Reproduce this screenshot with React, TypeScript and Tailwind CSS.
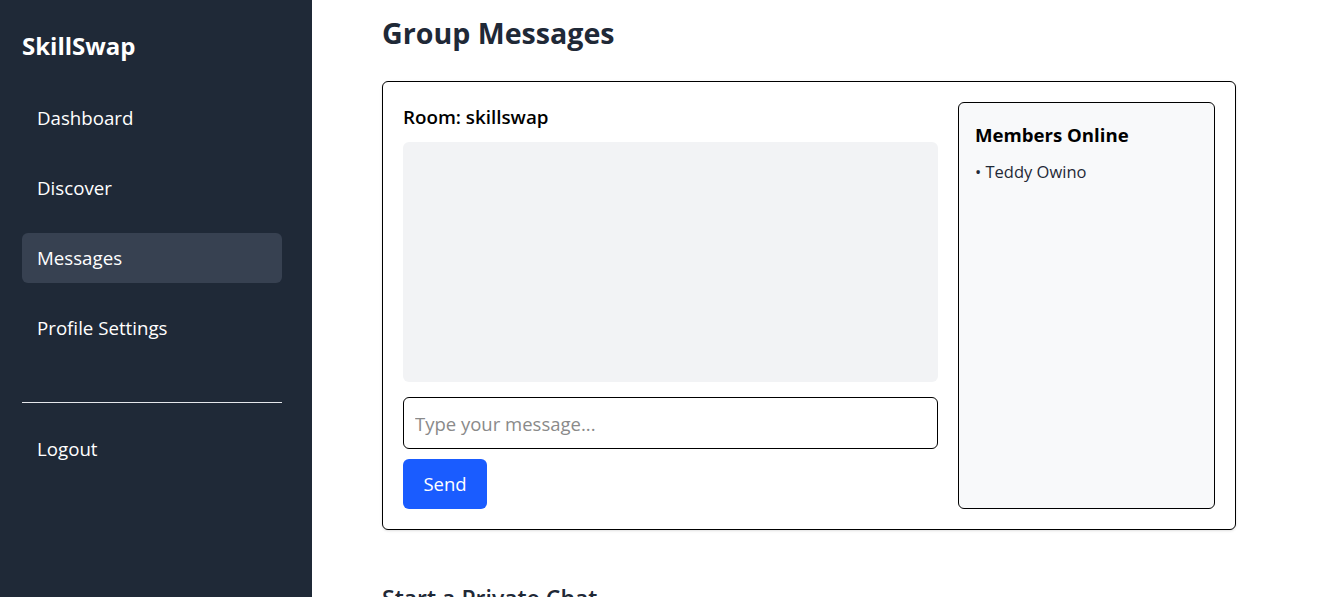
import React, { useEffect, useRef, useState } from 'react'

const navItems = ['Dashboard', 'Discover', 'Messages', 'Profile Settings']

const Sidebar = ({ active }: { active: string }) => {
    return (
        <aside className="flex h-full w-[312px] shrink-0 flex-col bg-[#1f2937] pl-[22px] pr-[30px] pt-[28px] text-white">
            <h1 className="text-[24px] font-bold leading-[36px]">SkillSwap</h1>
            <nav className="mt-[29px] flex flex-col gap-[20px]">
                {navItems.map((item) => (
                    <a
                        key={item}
                        href="#"
                        className={`flex h-[50px] items-center rounded-md px-[15px] text-[18.7px] ${
                            item == active ? 'bg-[#374151]' : ''
                        }`}
                    >
                        {item}
                    </a>
                ))}
            </nav>
            <hr className="mt-[49px] border-t border-[#e5e7eb]" />
            <a href="#" className="mt-[21px] flex h-[50px] items-center px-[15px] text-[18.7px]">
                Logout
            </a>
        </aside>
    )
}

const GroupChat = () => {
    const [message, setMessage] = useState('')
    const members = ['Teddy Owino']

    return (
        <div className="flex w-full max-w-[854px] gap-[20px] rounded-md border border-black bg-white p-[20px] shadow-sm">
            <div className="flex flex-1 flex-col">
                <h3 className="mt-[3px] text-[18.8px] font-semibold leading-[24px] text-black">Room: skillswap</h3>
                <div className="mt-[13px] h-[240px] rounded-md bg-[#f2f3f5]" />
                <input
                    value={message}
                    onChange={(e) => setMessage(e.target.value)}
                    placeholder="Type your message..."
                    className="mt-[15px] h-[52px] w-full rounded-md border border-black px-[11px] text-[18.5px] text-black outline-none placeholder:text-[#8a8a8a]"
                />
                <button className="mt-[10px] h-[50px] w-[84px] rounded-md bg-[#1a5cff] text-[18.5px] text-white">Send</button>
            </div>
            <div className="w-[257px] shrink-0 rounded-md border border-black bg-[#f8f9fa] px-[16px] py-[18px]">
                <h4 className="text-[18.6px] font-bold leading-[28px] text-black">Members Online</h4>
                <ul className="mt-[12px]">
                    {members.map((m) => (
                        <li key={m} className="text-[16.5px] leading-[22px] text-[#1f2937]">
                            • {m}
                        </li>
                    ))}
                </ul>
            </div>
        </div>
    )
}

export default function App() {
    const mainRef = useRef<HTMLElement>(null)

    useEffect(() => {
        if (mainRef.current) mainRef.current.scrollTop = 67
    }, [])

    return (
        <div className="flex h-screen overflow-hidden bg-white font-['Open_Sans',_sans-serif]">
            <Sidebar active="Messages" />
            <main
                ref={mainRef}
                className="flex-1 overflow-y-auto px-[70px] pb-[28px] pt-[80px] [&::-webkit-scrollbar]:w-[25px] [&::-webkit-scrollbar-thumb]:rounded-full [&::-webkit-scrollbar-thumb]:border-[6px] [&::-webkit-scrollbar-thumb]:border-solid [&::-webkit-scrollbar-thumb]:border-[#f8f8f8] [&::-webkit-scrollbar-thumb]:bg-[#8c8c8c] [&::-webkit-scrollbar-track]:bg-[#f8f8f8]"
            >
                <h2 className="text-[28.6px] font-bold leading-[40px] text-[#1f2937]">Group Messages</h2>
                <div className="mt-[28px]">
                    <GroupChat />
                </div>
                <h3 className="mt-[53px] text-[23px] font-semibold leading-[30px] text-[#1f2937]">Start a Private Chat</h3>
                <div className="mt-[16px] flex gap-[10px]">
                    <select className="h-[44px] w-[300px] rounded-md border border-black px-[10px] text-[16px]">
                        <option>Select a user</option>
                    </select>
                    <button className="h-[44px] rounded-md bg-[#1a5cff] px-[18px] text-[16px] text-white">Start Chat</button>
                </div>
            </main>
        </div>
    )
}
